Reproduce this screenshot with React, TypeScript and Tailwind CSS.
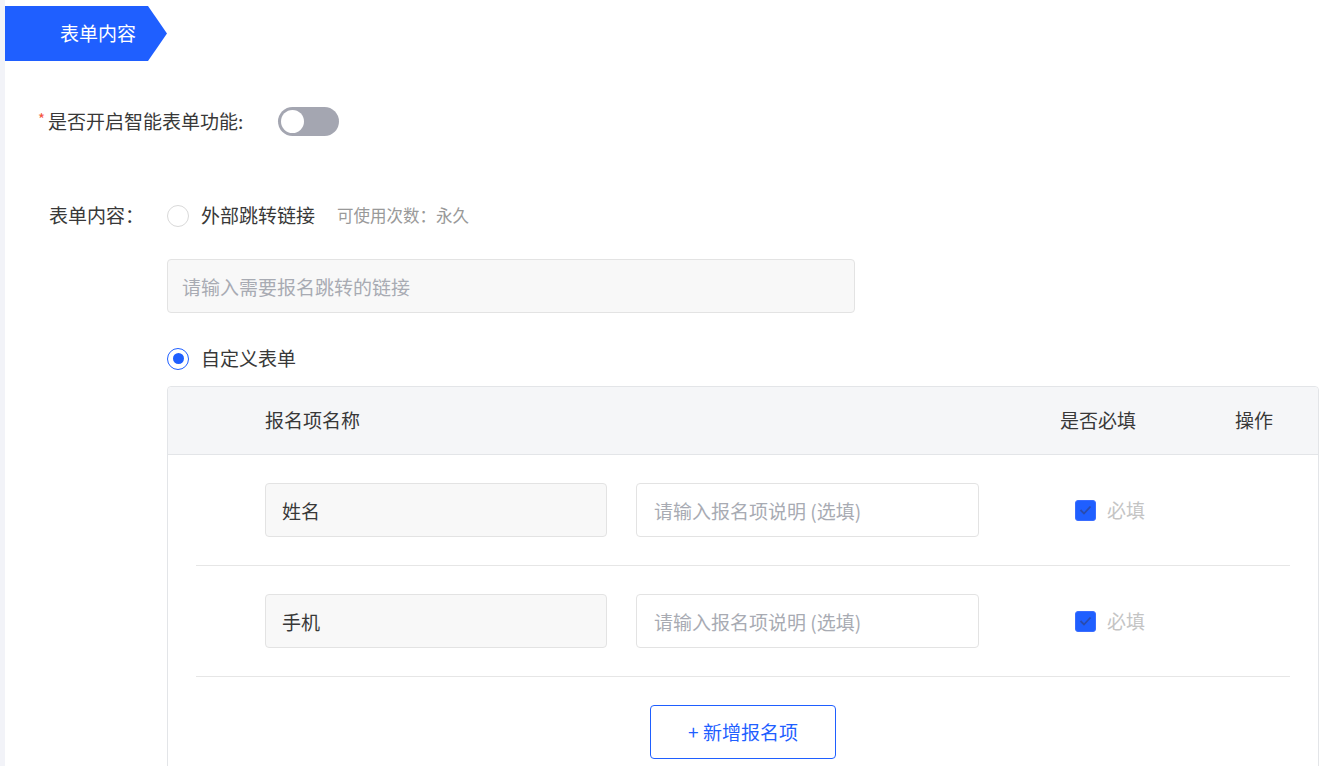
import React from 'react';

const font = { fontFamily: '"Noto Sans CJK SC", "Noto Sans", sans-serif' };

function Radio({ checked }: { checked?: boolean }) {
  return checked ? (
    <span className="w-[22px] h-[22px] rounded-full border-[1.5px] border-[#1f5fff] bg-white flex items-center justify-center shrink-0">
      <span className="w-[11px] h-[11px] rounded-full bg-[#1f5fff]" />
    </span>
  ) : (
    <span className="w-[22px] h-[22px] rounded-full border border-[#d9d9d9] bg-white shrink-0" />
  );
}

function FieldRow({ name }: { name: string }) {
  return (
    <div className="mx-[28px] border-b border-[#e6e6e6] pt-[28px] pb-[28px] flex items-center pl-[69px]">
      <input
        readOnly
        value={name}
        className="w-[342px] h-[54px] rounded-[4px] border border-[#e3e3e3] bg-[#f8f8f8] pl-[16px] text-[19px] text-[#383838] outline-none"
      />
      <input
        readOnly
        placeholder="请输入报名项说明 (选填)"
        className="ml-[29px] w-[343px] h-[54px] rounded-[4px] border border-[#e3e3e3] bg-white pl-[17px] text-[19px] text-[#383838] placeholder:text-[#a8abb3] outline-none"
      />
      <span className="ml-[96px] w-[21px] h-[21px] rounded-[3px] bg-[#1f5fff] border border-[#3a6dff] flex items-center justify-center">
        <svg width="13" height="10" viewBox="0 0 13 10" fill="none">
          <path d="M1.5 5l3.5 3.5L11.5 1.5" stroke="#2a4cae" strokeWidth="1.8" />
        </svg>
      </span>
      <span className="ml-[11px] text-[19px] text-[#c4c4c4]">必填</span>
    </div>
  );
}

export default function App() {
  return (
    <div className="flex min-h-[766px] bg-white text-[#383838]" style={font}>
      {/* left strip */}
      <div className="w-[5px] shrink-0 bg-[#f2f3f8]" />

      <div className="flex-1 pt-[6px]">
        {/* section banner */}
        <div className="w-[162px] h-[55px] bg-[#1f5fff] text-white text-[19px] flex items-center pl-[55px] [clip-path:polygon(0_0,143px_0,162px_50%,143px_100%,0_100%)]">
          表单内容
        </div>

        {/* smart form switch */}
        <div className="mt-[46px] pl-[33px] flex items-center h-[29px]">
          <span className="text-[#f5553d] text-[15px] mr-[3px] -mt-[4px]">*</span>
          <span className="text-[19px]">是否开启智能表单功能:</span>
          <span className="ml-[35px] w-[61px] h-[29px] rounded-full bg-[#a4a6b1] flex items-center pl-[3px]">
            <span className="w-[23px] h-[23px] rounded-full bg-white" />
          </span>
        </div>

        {/* form content */}
        <div className="mt-[65px] pl-[44px] flex items-center h-[29px]">
          <span className="w-[118px] text-[19px]">表单内容：</span>
          <Radio />
          <span className="ml-[12px] text-[19px]">外部跳转链接</span>
          <span className="ml-[22px] text-[16.5px] text-[#999]">可使用次数：永久</span>
        </div>

        <input
          readOnly
          placeholder="请输入需要报名跳转的链接"
          className="block mt-[29px] ml-[162px] w-[688px] h-[54px] rounded-[4px] border border-[#e3e3e3] bg-[#f8f8f8] pl-[14px] text-[19px] placeholder:text-[#a8abb3] outline-none"
        />

        <div className="mt-[31px] ml-[162px] flex items-center h-[29px]">
          <Radio checked />
          <span className="ml-[12px] text-[19px]">自定义表单</span>
        </div>

        {/* custom form table */}
        <div className="mt-[13px] ml-[162px] w-[1152px] border border-[#e3e5e8] rounded-t-[4px] pb-[60px]">
          <div className="h-[68px] bg-[#f5f6f8] border-b border-[#e3e5e8] flex items-center pl-[97px] text-[19px] rounded-t-[4px]">
            <span className="w-[795px]">报名项名称</span>
            <span className="w-[175px]">是否必填</span>
            <span>操作</span>
          </div>

          <FieldRow name="姓名" />
          <FieldRow name="手机" />

          <div className="pt-[28px] flex justify-center">
            <button className="w-[186px] h-[54px] rounded-[4px] border border-[#1f5fff] text-[#1f5fff] text-[19px] bg-white">
              + 新增报名项
            </button>
          </div>
        </div>
      </div>
    </div>
  );
}
